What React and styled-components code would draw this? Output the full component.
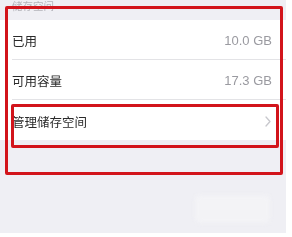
import React from "react";
import styled, { createGlobalStyle } from "styled-components";

const GlobalStyle = createGlobalStyle`
  html, body {
    margin: 0;
    padding: 0;
    background: #ffffff;
  }
  body {
    font-family: "Noto Sans CJK SC", "Liberation Sans", sans-serif;
  }
`;

const rows = [
  { label: "已用", value: "10.0 GB" },
  { label: "可用容量", value: "17.3 GB" },
];

const Chevron = () => (
  <svg width="6" height="11" viewBox="0 0 6 11" fill="none">
    <path d="M1 1l4 4.5L1 10" stroke="#c8c8cd" strokeWidth="1.3" strokeLinecap="round" strokeLinejoin="round" />
  </svg>
);

const App = () => {
  return (
    <>
      <GlobalStyle />
      <Page>
        <SectionHeader>
          <span>储存空间</span>
        </SectionHeader>
        <Group>
          {rows.map((row) => (
            <Row key={row.label}>
              <Label>{row.label}</Label>
              <Value>{row.value}</Value>
            </Row>
          ))}
          <Row>
            <Label>管理储存空间</Label>
            <Chevron />
          </Row>
        </Group>
        <Footer>
          <GhostButton />
        </Footer>

        <Highlight $left={5} $top={6} $width={278} $height={169} />
        <Highlight $left={11} $top={104} $width={268} $height={44} />
      </Page>
    </>
  );
};

const Page = styled.div`
  position: relative;
  width: 286px;
  height: 233px;
  background: #efeff4;
  overflow: hidden;
`;

const SectionHeader = styled.div`
  height: 20px;
  padding-left: 12px;
  overflow: hidden;

  & span {
    display: block;
    margin-top: 0;
    font-size: 10.5px;
    line-height: 11px;
    color: #b4b4ba;
    filter: blur(0.4px);
  }
`;

const Group = styled.div`
  background: #ffffff;
`;

const Row = styled.div`
  display: flex;
  align-items: center;
  justify-content: space-between;
  height: 40px;
  margin-left: 12px;
  padding-right: 14px;
  padding-top: 2px;
  box-sizing: border-box;
  border-bottom: 1px solid #e3e3e6;

  &:last-child {
    border-bottom: none;
  }

  & svg {
    margin-right: 1px;
  }
`;

const Label = styled.span`
  font-size: 12.5px;
  color: #2a2a2a;
  filter: blur(0.3px);
`;

const Value = styled.span`
  font-family: "Liberation Sans", "Noto Sans CJK SC", sans-serif;
  font-size: 13px;
  color: #9a9aa0;
  filter: blur(0.3px);
`;

const Footer = styled.div`
  display: flex;
  justify-content: flex-end;
  padding: 55px 16px 0 0;
`;

const GhostButton = styled.div`
  width: 75px;
  height: 28px;
  border-radius: 5px;
  background: #f3f3f6;
  filter: blur(2px);
`;

const Highlight = styled.div`
  position: absolute;
  left: ${(p) => p.$left}px;
  top: ${(p) => p.$top}px;
  width: ${(p) => p.$width}px;
  height: ${(p) => p.$height}px;
  box-sizing: border-box;
  border: 3px solid #d2141b;
  border-radius: 2px;
  pointer-events: none;
`;

export default App;
